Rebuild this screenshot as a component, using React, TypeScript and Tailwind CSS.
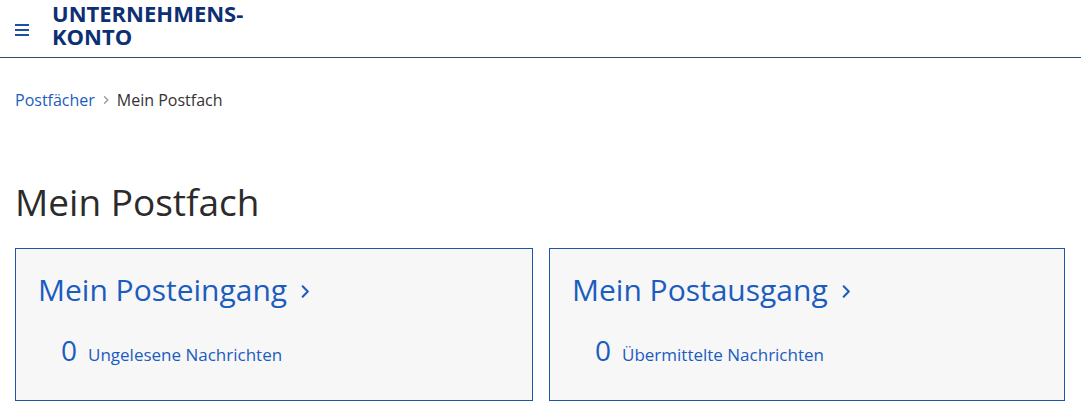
import React from 'react'

function Chevron({ className }: { className?: string }) {
  return (
    <svg viewBox="0 0 10 16" className={className} fill="none" stroke="currentColor" strokeWidth="2.2" strokeLinecap="round" strokeLinejoin="round">
      <path d="M2.5 2.5 8 8l-5.5 5.5" />
    </svg>
  )
}

function MailboxCard({ title, count, label }: { title: string; count: number; label: string }) {
  return (
    <a href="#" className="block h-[153px] border border-[#1d56a8] bg-[#f7f7f7] px-[22px] pt-[21px]">
      <div className="flex items-center text-[30px] leading-[40px] text-[#1b5cbf]">
        <span>{title}</span>
        <Chevron className="ml-[13px] mt-[3px] h-[15px] w-[10px]" />
      </div>
      <div className="mt-[22px] flex items-baseline pl-[23px] text-[#1b5cbf]">
        <span className="text-[28px] leading-[36px]">{count}</span>
        <span className="ml-[11px] text-[17px]">{label}</span>
      </div>
    </a>
  )
}

export default function App() {
  return (
    <div className="min-h-screen bg-white font-['Open_Sans',sans-serif] text-[#333]">
      {/* Header */}
      <header className="flex h-[58px] items-center border-b border-[#2e4d66] pb-[7px]">
        <button className="ml-[15px] flex flex-col gap-[3px] pt-[10px]">
          <span className="block h-[2px] w-[14px] bg-[#1b50a8]" />
          <span className="block h-[2px] w-[14px] bg-[#1b50a8]" />
          <span className="block h-[2px] w-[14px] bg-[#1b50a8]" />
        </button>
        <div className="ml-[23px] text-[22px] font-bold leading-[23px] text-[#0d2f74]">
          UNTERNEHMENS-
          <br />
          KONTO
        </div>
      </header>

      <main className="px-[15px]">
        {/* Breadcrumb */}
        <nav className="mt-[31px] flex items-center text-[16px] leading-[22px]">
          <a href="#" className="text-[#1b5cbf]">Postfächer</a>
          <Chevron className="mx-[8px] h-[10px] w-[6px] text-[#9a9a9a]" />
          <span className="text-[#333]">Mein Postfach</span>
        </nav>

        <h1 className="mt-[68px] text-[37px] leading-[46px] text-[#2b2b2b]">Mein Postfach</h1>

        <div className="mt-[23px] grid grid-cols-[518px_1fr] gap-[16px] pr-px">
          <MailboxCard title="Mein Posteingang" count={0} label="Ungelesene Nachrichten" />
          <MailboxCard title="Mein Postausgang" count={0} label="Übermittelte Nachrichten" />
        </div>
      </main>
    </div>
  )
}
